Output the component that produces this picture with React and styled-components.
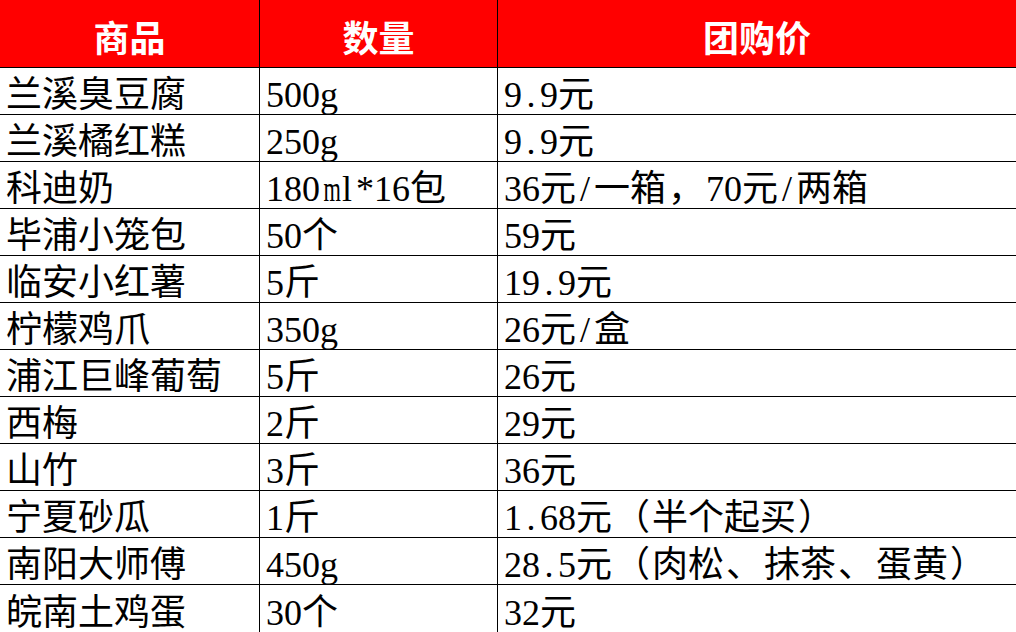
import React from 'react';
import styled, { createGlobalStyle } from 'styled-components';

const GlobalStyle = createGlobalStyle`
  html, body {
    margin: 0;
    padding: 0;
    background: #ffffff;
  }
  body {
    width: 1016px;
    height: 632px;
    overflow: hidden;
  }
`;

const rows = [
  ['兰溪臭豆腐', '500g', '9.9元'],
  ['兰溪橘红糕', '250g', '9.9元'],
  ['科迪奶', '180ml*16包', '36元/一箱，70元/两箱'],
  ['毕浦小笼包', '50个', '59元'],
  ['临安小红薯', '5斤', '19.9元'],
  ['柠檬鸡爪', '350g', '26元/盒'],
  ['浦江巨峰葡萄', '5斤', '26元'],
  ['西梅', '2斤', '29元'],
  ['山竹', '3斤', '36元'],
  ['宁夏砂瓜', '1斤', '1.68元（半个起买）'],
  ['南阳大师傅', '450g', '28.5元（肉松、抹茶、蛋黄）'],
  ['皖南土鸡蛋', '30个', '32元']
];

const Sheet = styled.div`
  display: grid;
  grid-template-columns: 260px 238px 518px;
  grid-auto-rows: 47px;
  grid-template-rows: 68px;
  width: 1016px;
`;

const HeadCell = styled.div`
  box-sizing: border-box;
  display: flex;
  align-items: center;
  justify-content: center;
  padding-top: 4px;
  background: #ff0000;
  color: #ffffff;
  font-family: "Noto Sans CJK SC", "Noto Sans", sans-serif;
  font-weight: 700;
  font-size: 36px;
  line-height: 36px;
  border-bottom: 1px solid #000;
  border-right: ${p => (p.$last ? 'none' : '1px solid #000')};
`;

const Cell = styled.div`
  box-sizing: border-box;
  display: flex;
  align-items: flex-end;
  padding: 0 0 1px 6px;
  font-family: "Liberation Serif", "Noto Sans CJK SC", serif;
  font-weight: 400;
  font-size: 36px;
  line-height: 36px;
  color: #000;
  white-space: nowrap;
  overflow: hidden;
  border-bottom: ${p => (p.$bottom ? 'none' : '1px solid #000')};
  border-right: ${p => (p.$last ? 'none' : '1px solid #000')};
`;

// half-width latin glyphs, like the sheet's CJK font renders them
const Half = styled.span`
  display: inline-block;
  width: 0.5em;
  text-align: center;
  transform: ${p => (p.$wide ? 'scaleX(0.62)' : 'none')};
`;

// full-width CJK glyphs on a fixed pitch; punctuation runs a little wider
const Full = styled.span`
  display: inline-block;
  width: ${p => (p.$punct ? '40px' : '1em')};
  text-align: center;
`;

const Text = ({ children }) => (
  <span>
    {Array.from(children).map((ch, k) =>
      ch.charCodeAt(0) < 256 ? (
        <Half key={k} $wide={/[mwMW]/.test(ch)}>{ch}</Half>
      ) : (
        <Full key={k} $punct={/[（）、，]/.test(ch)}>{ch}</Full>
      )
    )}
  </span>
);

export default function App() {
  return (
    <>
      <GlobalStyle />
      <Sheet>
        <HeadCell>商品</HeadCell>
        <HeadCell>数量</HeadCell>
        <HeadCell $last>团购价</HeadCell>
        {rows.map((r, i) =>
          r.map((text, j) => (
            <Cell key={i + '-' + j} $last={j === 2} $bottom={i === rows.length - 1}>
              <Text>{text}</Text>
            </Cell>
          ))
        )}
      </Sheet>
    </>
  );
}
